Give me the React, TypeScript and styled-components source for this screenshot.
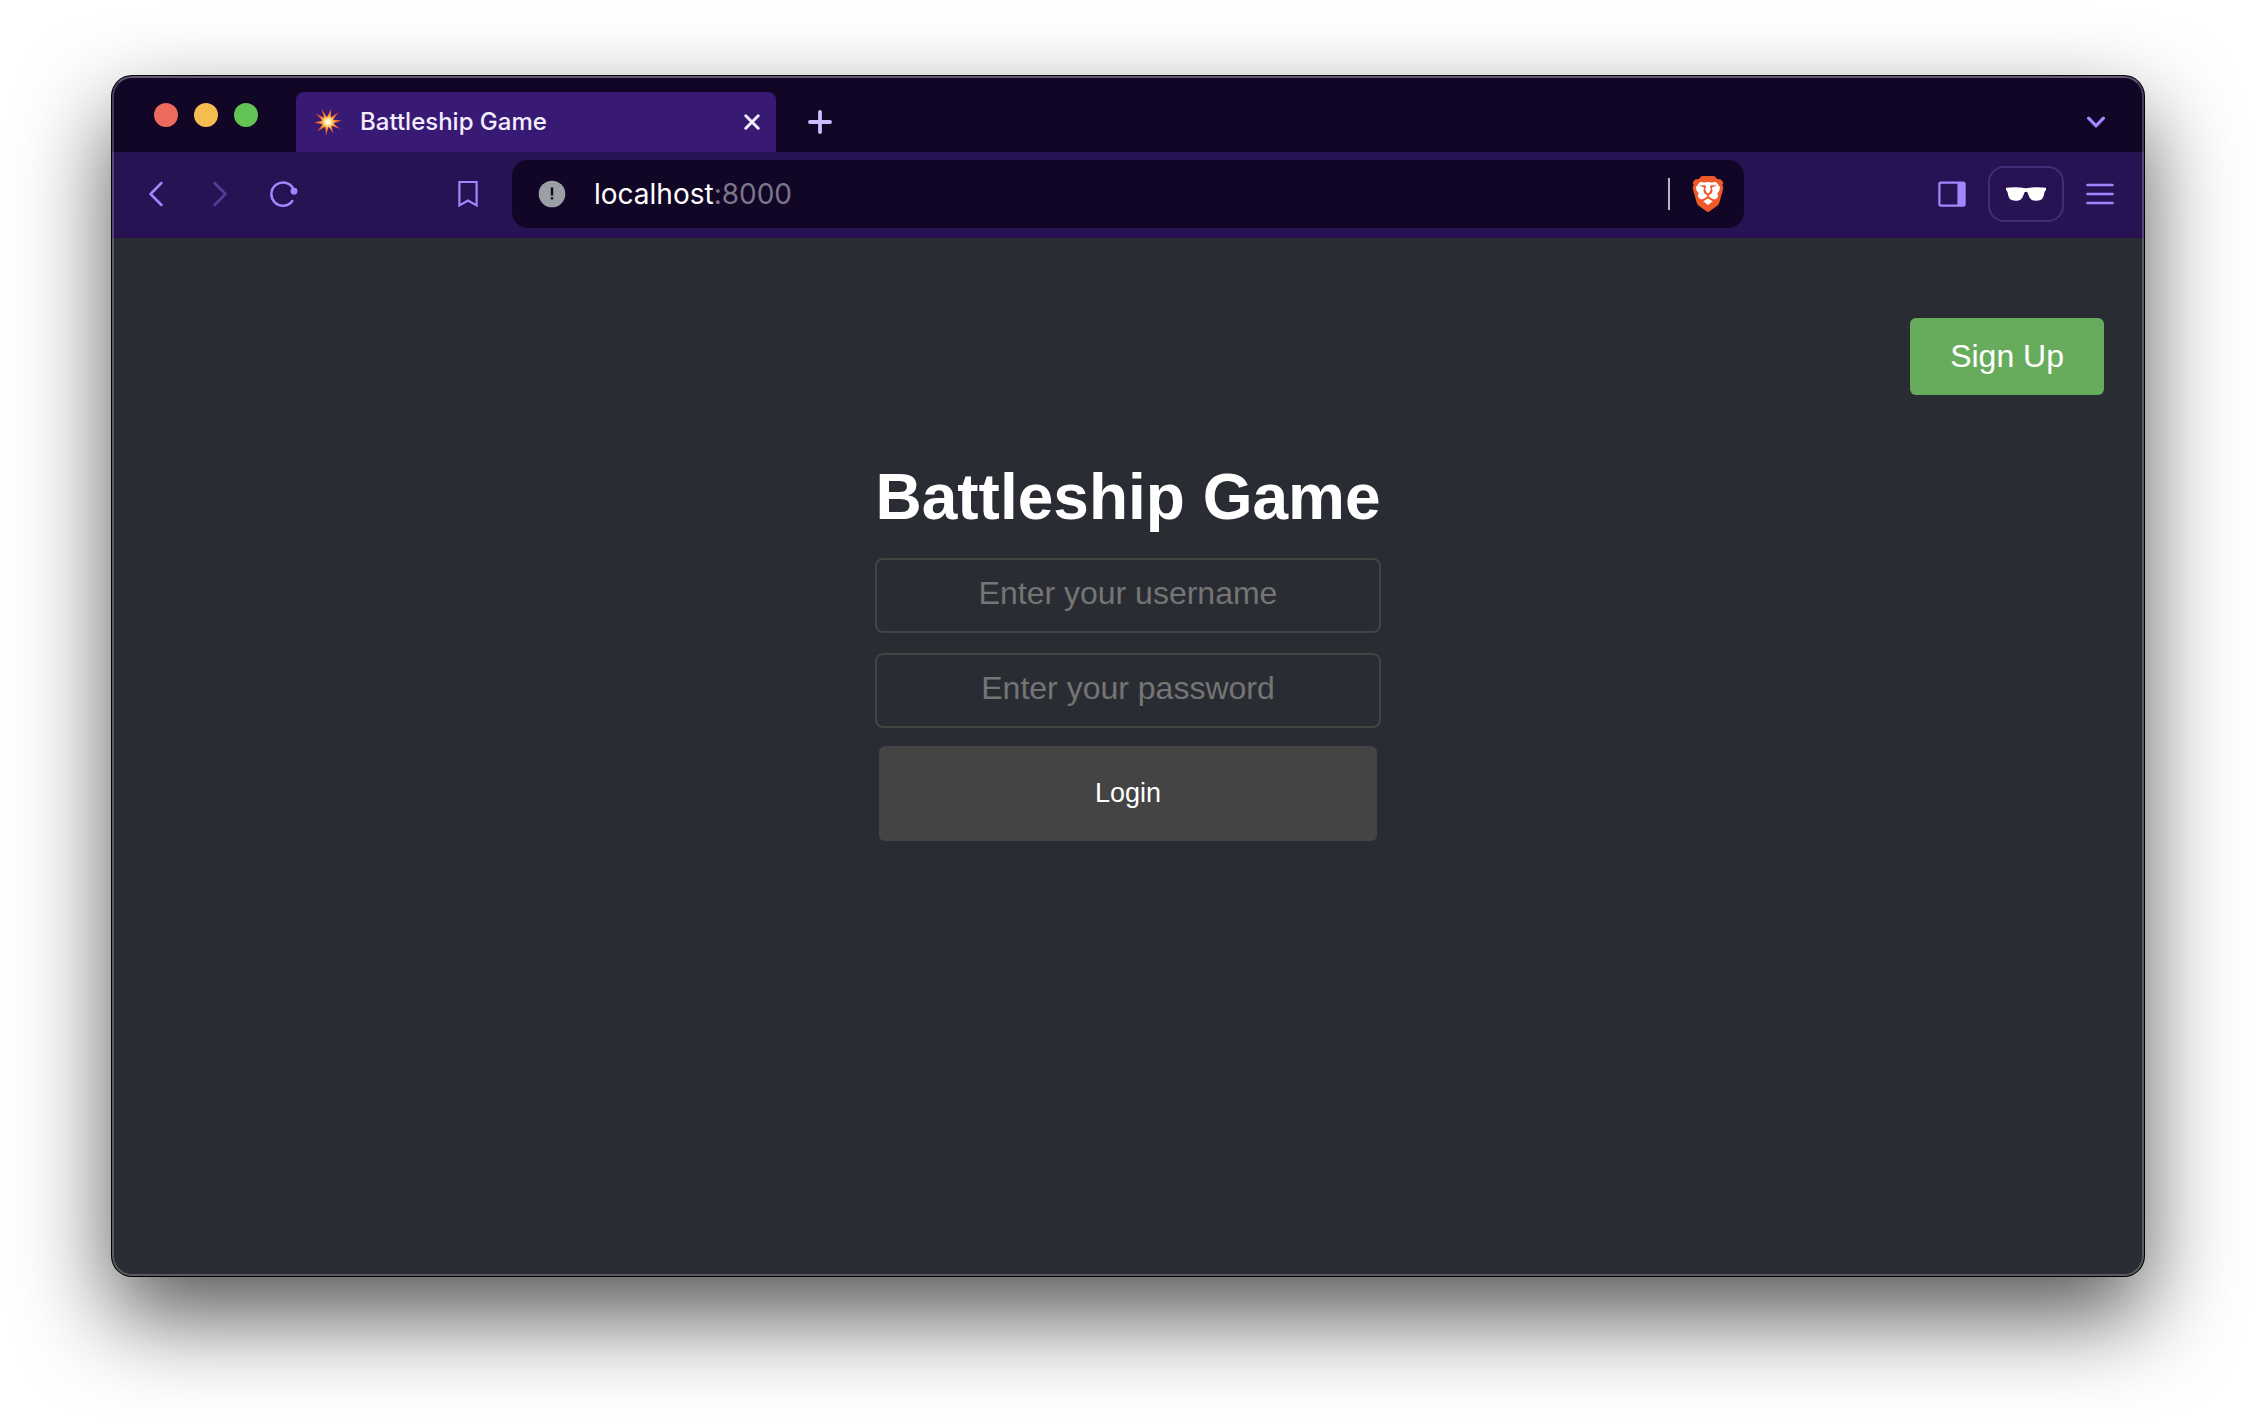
import React from "react";
import styled, { createGlobalStyle } from "styled-components";

const GlobalStyle = createGlobalStyle`
  *, *::before, *::after { box-sizing: border-box; }
  body { margin: 0; background: #ffffff; }
  button, input { font: inherit; margin: 0; }
`;

const uiFont = `Inter, "Liberation Sans", sans-serif`;
const pageFont = `"Liberation Sans", Arial, sans-serif`;

const Desktop = styled.div`
  display: flex;
  min-height: 100vh;
  padding: 76px 112px 148px;
`;

const BrowserWindow = styled.div`
  position: relative;
  flex: 1;
  display: flex;
  flex-direction: column;
  overflow: hidden;
  border-radius: 20px;
  background: #2a2c34;
  box-shadow: 0 0 0 1px #000000, 0 40px 92px rgba(0, 0, 0, 0.67);

  &::after {
    content: "";
    position: absolute;
    inset: 0;
    border: 2px solid rgba(255, 255, 255, 0.22);
    border-top-color: rgba(255, 255, 255, 0.34);
    border-radius: inherit;
    pointer-events: none;
  }
`;

const TabStrip = styled.header`
  display: flex;
  align-items: flex-end;
  height: 76px;
  padding: 0 28px 0 42px;
  background: #110626;
  font-family: ${uiFont};
`;

const TrafficLights = styled.div`
  display: flex;
  align-self: center;
  gap: 16px;
  margin: 2px 38px 0 0;
`;

const Light = styled.button<{ $color: string }>`
  width: 24px;
  height: 24px;
  padding: 0;
  border: 0;
  border-radius: 50%;
  background: ${(p) => p.$color};
`;

const Tab = styled.div`
  display: flex;
  align-items: center;
  gap: 18px;
  width: 480px;
  height: 60px;
  padding: 0 12px 0 18px;
  border-radius: 8px 8px 0 0;
  background: #381a75;
`;

const TabTitle = styled.span`
  flex: 1;
  color: #f3edff;
  font-size: 24px;
  font-weight: 500;
  line-height: 32px;
  white-space: nowrap;
`;

const IconButton = styled.button<{ $color?: string; $width?: number; $height?: number }>`
  display: flex;
  align-items: center;
  justify-content: center;
  flex: none;
  width: ${(p) => p.$width ?? 40}px;
  height: ${(p) => p.$height ?? 60}px;
  padding: 0;
  border: 0;
  background: transparent;
  color: ${(p) => p.$color ?? "#a286ff"};
`;

const NewTabButton = styled(IconButton)`
  margin-left: 24px;
  margin-right: auto;
`;

const Toolbar = styled.nav`
  display: grid;
  grid-template-columns: 400px minmax(0, 1fr) 400px;
  height: 86px;
  padding: 8px 0 10px;
  background: #271253;
  font-family: ${uiFont};
`;

const ToolGroup = styled.div<{ $end?: boolean }>`
  display: flex;
  align-items: center;
  justify-content: ${(p) => (p.$end ? "flex-end" : "flex-start")};
  gap: ${(p) => (p.$end ? 16 : 24)}px;
  padding: 0 24px;
`;

const BookmarkButton = styled(IconButton)`
  margin-left: auto;
`;

const PrivateButton = styled(IconButton)`
  border: 2px solid #432d78;
  border-radius: 16px;
`;

const AddressBar = styled.div`
  display: flex;
  align-items: center;
  padding: 0 20px 0 26px;
  border-radius: 16px;
  background: #110626;
`;

const Address = styled.div`
  flex: 1;
  margin-left: 28px;
  color: #ffffff;
  font-size: 28px;
  line-height: 36px;
  white-space: nowrap;
`;

const Port = styled.span`
  color: #7c7589;
`;

const Divider = styled.span`
  width: 2px;
  height: 32px;
  margin-right: 22px;
  background: #b9b6bf;
`;

const Page = styled.main`
  flex: 1;
  display: flex;
  flex-direction: column;
  padding: 80px 40px 40px;
  font-family: ${pageFont};
`;

const SignUpButton = styled.button`
  align-self: flex-end;
  padding: 20px 40px;
  border: 0;
  border-radius: 6px;
  background: #67ac5d;
  color: #ffffff;
  font-size: 32px;
  line-height: 37px;
`;

const LoginForm = styled.form`
  display: flex;
  flex-direction: column;
  align-self: center;
  width: 506px;
  margin-top: 67px;
`;

const Title = styled.h1`
  margin: 0 0 26px;
  color: #ffffff;
  font-size: 64px;
  font-weight: 700;
  line-height: 70px;
  text-align: center;
  white-space: nowrap;
`;

const Field = styled.input`
  width: 100%;
  height: 75px;
  padding: 14px 20px 18px;
  border: 2px solid #444444;
  border-radius: 8px;
  background: transparent;
  color: #ffffff;
  font-size: 32px;
  text-align: center;

  & + & {
    margin-top: 20px;
  }

  &::placeholder {
    color: #757575;
    opacity: 1;
  }
`;

const LoginButton = styled.button`
  height: 95px;
  margin: 18px 4px 0;
  border: 0;
  border-radius: 6px;
  background: #444444;
  color: #ffffff;
  font-size: 27px;
`;

const Explosion = () => (
  <svg width="28" height="28" viewBox="0 0 28 28" aria-hidden="true">
    <defs>
      <radialGradient id="blast" cx="14" cy="14" r="14" gradientUnits="userSpaceOnUse">
        <stop offset="0" stopColor="#ffffff" />
        <stop offset="0.16" stopColor="#fff6c8" />
        <stop offset="0.34" stopColor="#ffc65a" />
        <stop offset="0.54" stopColor="#f27a34" />
        <stop offset="1" stopColor="#dd4520" />
      </radialGradient>
    </defs>
    <path
      fill="url(#blast)"
      d="M7.5 0.3 12.9 9.2 17.2 0.6 16.8 9.6 24.8 4 19 11.8 28 12.6 19.4 15.2 26.2 21 17.4 17.8 19.4 25.4 14.6 18.8 12 28 11.2 18.8 3 23.4 8.6 16.4 0 14.4 8.4 12.4 1.4 5.2 10 9.8Z"
    />
  </svg>
);

const BraveLion = () => (
  <svg width="32" height="36" viewBox="0 0 32 36" aria-hidden="true">
    <path
      fill="#f05a28"
      d="M9.5 0H22.5L25.2 3 28.8 3.4 31.4 6.4 30.4 9 31.4 12 27.2 27Q26.8 28.6 25.2 29.8L17.6 35.2Q16 36.4 14.4 35.2L6.8 29.8Q5.2 28.6 4.8 27L0.6 12 1.6 9 0.6 6.4 3.2 3.4 6.8 3Z"
    />
    <path
      fill="#ffffff"
      d="M8 6 12.4 6.6Q16 5.4 19.6 6.6L24 6 28.2 11.2 27.4 14.6 25.4 17.4Q26.8 20 25.2 22L22.6 23.6 19.8 22.4 16 19.8 12.2 22.4 9.4 23.6 6.8 22Q5.2 20 6.6 17.4L4.6 14.6 3.8 11.2Z"
    />
    <path fill="#ffffff" d="M16 22.6 20.6 25.2 16.8 28.4Q16 29 15.2 28.4L11.4 25.2Z" />
    <path
      fill="#f05a28"
      d="M6.6 9.6 13.2 9.2 14 10.4 13.2 13.4 14.6 16.6 16 17.4 17.4 16.6 18.8 13.4 18 10.4 18.8 9.2 25.4 9.6 20.2 11.2 19.8 12 20.6 14.6 19.6 17.4 16.8 19.2V21H15.2V19.2L12.4 17.4 11.4 14.6 12.2 12 11.8 11.2Z"
    />
    <path fill="#ffffff" d="M14.6 8.6H17.4L16.8 10.4 17.4 13.4 16.8 15.6 16 16.2 15.2 15.6 14.6 13.4 15.2 10.4Z" />
  </svg>
);

const stroke = {
  fill: "none",
  stroke: "currentColor",
  strokeLinecap: "round" as const,
  strokeLinejoin: "round" as const,
};

export default function App() {
  return (
    <>
      <GlobalStyle />
      <Desktop>
        <BrowserWindow>
          <TabStrip>
            <TrafficLights>
              <Light $color="#ed6a5e" aria-label="Close window" />
              <Light $color="#f5bd4f" aria-label="Minimize window" />
              <Light $color="#61c454" aria-label="Zoom window" />
            </TrafficLights>
            <Tab>
              <Explosion />
              <TabTitle>Battleship Game</TabTitle>
              <IconButton $width={24} $color="#f3edff" aria-label="Close tab">
                <svg width="16" height="16" viewBox="0 0 16 16">
                  <path {...stroke} strokeWidth="3" d="M1.8 1.8 14.2 14.2M14.2 1.8 1.8 14.2" />
                </svg>
              </IconButton>
            </Tab>
            <NewTabButton $color="#cbbcff" aria-label="New tab">
              <svg width="24" height="24" viewBox="0 0 24 24">
                <path {...stroke} strokeWidth="3.8" d="M12 2V22M2 12H22" />
              </svg>
            </NewTabButton>
            <IconButton aria-label="Search tabs">
              <svg width="20" height="12" viewBox="0 0 20 12">
                <path {...stroke} strokeWidth="3.2" d="M2.6 2.2 10 9.8 17.4 2.2" />
              </svg>
            </IconButton>
          </TabStrip>

          <Toolbar aria-label="Browser toolbar">
            <ToolGroup>
              <IconButton aria-label="Back">
                <svg width="14" height="26" viewBox="0 0 14 26">
                  <path {...stroke} strokeWidth="2.5" d="M12.4 2 1.6 13 12.4 24" />
                </svg>
              </IconButton>
              <IconButton $color="#573c98" aria-label="Forward">
                <svg width="14" height="26" viewBox="0 0 14 26">
                  <path {...stroke} strokeWidth="2.5" d="M1.6 2 12.4 13 1.6 24" />
                </svg>
              </IconButton>
              <IconButton aria-label="Reload">
                <svg width="28" height="28" viewBox="0 0 28 28">
                  <path {...stroke} strokeWidth="2.5" d="M23.2 8.6A11.6 11.6 0 1 0 22.3 21" />
                  <circle cx="24" cy="11.2" r="3.4" fill="currentColor" />
                </svg>
              </IconButton>
              <BookmarkButton aria-label="Bookmark this page">
                <svg width="20" height="28" viewBox="0 0 20 28">
                  <path {...stroke} strokeLinejoin="miter" strokeWidth="2.2" d="M1.4 2H18.6V25.4L10 20.6 1.4 25.4Z" />
                </svg>
              </BookmarkButton>
            </ToolGroup>

            <AddressBar>
              <IconButton $width={28} $color="#9aa0a6" aria-label="View site information">
                <svg width="28" height="28" viewBox="0 0 28 28">
                  <circle cx="14" cy="14" r="13.3" fill="currentColor" />
                  <path fill="#110626" d="M12.8 7.6H15.2V15.6H12.8ZM12.8 17.2H15.2V19.6H12.8Z" />
                </svg>
              </IconButton>
              <Address role="textbox" aria-label="Address" tabIndex={0}>
                localhost<Port>:8000</Port>
              </Address>
              <Divider />
              <IconButton $width={32} aria-label="Brave Shields">
                <BraveLion />
              </IconButton>
            </AddressBar>

            <ToolGroup $end>
              <IconButton aria-label="Show sidebar">
                <svg width="28" height="26" viewBox="0 0 28 26">
                  <rect {...stroke} x="1.4" y="1.6" width="25.2" height="23" rx="1.6" strokeWidth="2.2" />
                  <path fill="currentColor" d="M19.4 1.6H26.4V24.6H19.4Z" />
                </svg>
              </IconButton>
              <PrivateButton $width={76} $height={56} $color="#ffffff" aria-label="Private window">
                <svg width="40" height="14" viewBox="0 0 40 14">
                  <path
                    fill="currentColor"
                    d="M0 0.8C5 0 12 0 16 0.8Q20 1.6 24 0.8C28 0 35 0 40 0.8V3.2Q38.8 3.8 38.4 5.4C37.8 9 37 11.4 35 12.8C32 14.2 27.6 14.2 25.2 12.6C23 11 22.6 8 21.6 5.6Q20 3.8 18.4 5.6C17.4 8 17 11 14.8 12.6C12.4 14.2 8 14.2 5 12.8C3 11.4 2.2 9 1.6 5.4Q1.2 3.8 0 3.2Z"
                  />
                </svg>
              </PrivateButton>
              <IconButton aria-label="Menu">
                <svg width="28" height="22" viewBox="0 0 28 22">
                  <path {...stroke} strokeWidth="2.4" d="M1.4 2H26.6M1.4 11H26.6M1.4 20H26.6" />
                </svg>
              </IconButton>
            </ToolGroup>
          </Toolbar>

          <Page>
            <SignUpButton type="button">Sign Up</SignUpButton>
            <LoginForm onSubmit={(e) => e.preventDefault()}>
              <Title>Battleship Game</Title>
              <Field type="text" aria-label="Username" placeholder="Enter your username" />
              <Field type="password" aria-label="Password" placeholder="Enter your password" />
              <LoginButton type="submit">Login</LoginButton>
            </LoginForm>
          </Page>
        </BrowserWindow>
      </Desktop>
    </>
  );
}
